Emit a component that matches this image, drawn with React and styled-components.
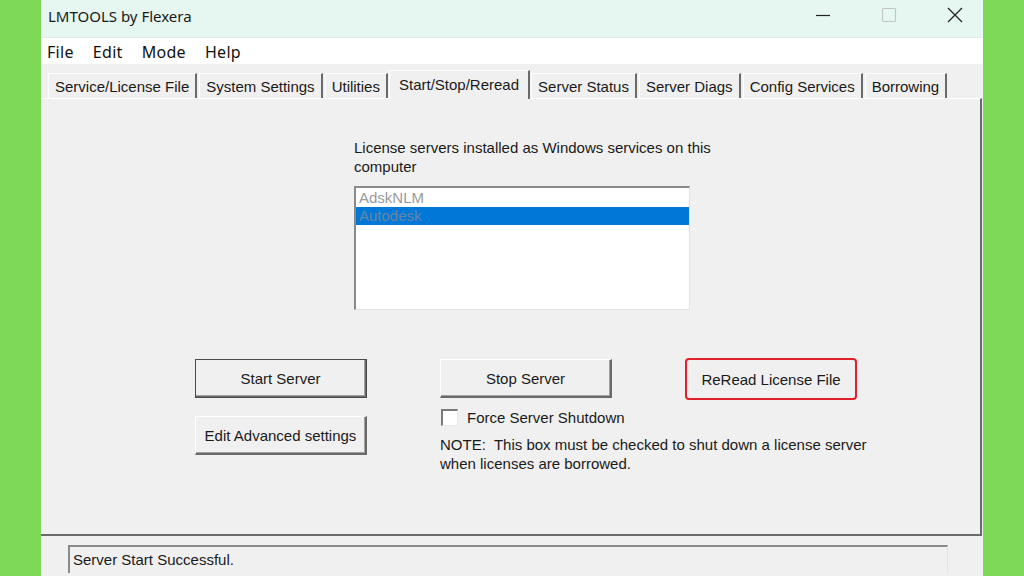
import styled, { createGlobalStyle } from "styled-components";

const GlobalStyle = createGlobalStyle`
  html, body {
    margin: 0;
    padding: 0;
    background: #7ed957;
    overflow: hidden;
  }
  body {
    font-family: "Liberation Sans", Arial, sans-serif;
  }
`;

const tabs = [
  "Service/License File",
  "System Settings",
  "Utilities",
  "Start/Stop/Reread",
  "Server Status",
  "Server Diags",
  "Config Services",
  "Borrowing",
];

export default function App() {
  return (
    <>
      <GlobalStyle />
      <Page>
        <Window>
          <TitleBar>
            <Title>LMTOOLS by Flexera</Title>
            <Controls>
              <Ctrl>
                <svg width="16" height="16" viewBox="0 0 16 16">
                  <line x1="1" y1="8.5" x2="15" y2="8.5" stroke="#222" strokeWidth="1.2" />
                </svg>
              </Ctrl>
              <Ctrl>
                <svg width="16" height="16" viewBox="0 0 16 16">
                  <rect x="1.5" y="1.5" width="13" height="13" rx="1" fill="none" stroke="#c4c4c4" strokeWidth="1.1" />
                </svg>
              </Ctrl>
              <Ctrl>
                <svg width="16" height="16" viewBox="0 0 16 16">
                  <path d="M1 1 L15 15 M15 1 L1 15" stroke="#222" strokeWidth="1.3" />
                </svg>
              </Ctrl>
            </Controls>
          </TitleBar>

          <MenuBar>
            <MenuItem>File</MenuItem>
            <MenuItem>Edit</MenuItem>
            <MenuItem>Mode</MenuItem>
            <MenuItem>Help</MenuItem>
          </MenuBar>

          <TabStrip>
            {tabs.map((t) => (
              <Tab key={t} $active={t === "Start/Stop/Reread"}>
                {t}
              </Tab>
            ))}
          </TabStrip>

          <Panel>
            <ListSection>
              <Label>License servers installed as Windows services on this computer</Label>
              <ListBox>
                <ListItem>AdskNLM</ListItem>
                <ListItem $selected>Autodesk</ListItem>
              </ListBox>
            </ListSection>

            <ButtonRow>
              <Column>
                <Button $default>Start Server</Button>
                <Button>Edit Advanced settings</Button>
              </Column>
              <Column>
                <Button>Stop Server</Button>
                <CheckRow>
                  <CheckBox />
                  <span>Force Server Shutdown</span>
                </CheckRow>
                <Note>
                  NOTE:&nbsp; This box must be checked to shut down a license server
                  <br />
                  when licenses are borrowed.
                </Note>
              </Column>
              <Column>
                <Highlight>
                  <Button $flat>ReRead License File</Button>
                </Highlight>
              </Column>
            </ButtonRow>
          </Panel>

          <StatusBar>
            <StatusField>Server Start Successful.</StatusField>
          </StatusBar>
        </Window>
      </Page>
    </>
  );
}

const Page = styled.div`
  width: 1024px;
  height: 576px;
  display: flex;
  padding-left: 41px;
  box-sizing: border-box;
`;

const Window = styled.div`
  width: 942px;
  height: 576px;
  background: #f0f0f0;
  display: flex;
  flex-direction: column;
  overflow: hidden;
`;

const TitleBar = styled.div`
  height: 38px;
  flex-shrink: 0;
  background: #e6f6f0;
  display: flex;
  align-items: center;
  justify-content: space-between;
  padding-left: 7px;
  border-bottom: 1px solid #e2e8e5;
  box-sizing: border-box;
`;

const Title = styled.div`
  font-family: "Noto Sans", "Liberation Sans", sans-serif;
  font-size: 15px;
  color: #1a1a1a;
  margin-top: -6px;
`;

const Controls = styled.div`
  display: flex;
  align-items: center;
  margin-top: -8px;
  margin-right: -5px;
`;

const Ctrl = styled.div`
  width: 66px;
  display: flex;
  justify-content: center;
`;

const MenuBar = styled.div`
  height: 26px;
  flex-shrink: 0;
  background: #ffffff;
  display: flex;
  align-items: center;
  padding-left: 6px;
`;

const MenuItem = styled.div`
  font-family: "Noto Sans", "Liberation Sans", sans-serif;
  font-size: 16px;
  letter-spacing: 0.3px;
  color: #111;
  margin-right: 19px;
  margin-top: 1px;
`;

const TabStrip = styled.div`
  height: 34px;
  flex-shrink: 0;
  display: flex;
  align-items: flex-end;
  padding-left: 6px;
  background: #f0f0f0;
  box-sizing: border-box;
`;

const Tab = styled.div`
  font-size: 15px;
  color: #1a1a1a;
  height: ${(p) => (p.$active ? "29px" : "25px")};
  line-height: ${(p) => (p.$active ? "27px" : "25px")};
  padding: 0 ${(p) => (p.$active ? "9px" : "6px")};
  margin: 0 ${(p) => (p.$active ? "0" : "1px")};
  margin-bottom: ${(p) => (p.$active ? "-1px" : "0")};
  border-top: 1px solid #ffffff;
  border-left: 1px solid #ffffff;
  border-right: 2px solid #6a6a6a;
  background: #f0f0f0;
  white-space: nowrap;
  box-sizing: border-box;
  position: relative;
  z-index: ${(p) => (p.$active ? 2 : 1)};
`;

const Panel = styled.div`
  flex: 1;
  position: relative;
  border-top: 1px solid #ffffff;
  border-right: 2px solid #6a6a6a;
  border-bottom: 2px solid #6a6a6a;
  margin-right: 1px;
  padding-top: 39px;
  display: flex;
  flex-direction: column;
  background: #f0f0f0;
`;

const ListSection = styled.div`
  margin-left: 313px;
  width: 365px;
`;

const Label = styled.div`
  font-size: 15px;
  line-height: 19px;
  color: #1a1a1a;
`;

const ListBox = styled.div`
  margin-top: 10px;
  width: 336px;
  height: 124px;
  background: #ffffff;
  border-top: 2px solid #8a8a8a;
  border-left: 2px solid #8a8a8a;
  border-right: 1px solid #e3e3e3;
  border-bottom: 1px solid #e3e3e3;
  box-sizing: border-box;
  padding-top: 1px;
`;

const ListItem = styled.div`
  height: 18px;
  line-height: 18px;
  font-size: 15px;
  padding-left: 3px;
  color: ${(p) => (p.$selected ? "#6a84a6" : "#9a9a9a")};
  background: ${(p) => (p.$selected ? "#0078d7" : "transparent")};
`;

const ButtonRow = styled.div`
  display: flex;
  margin-top: 49px;
  margin-left: 154px;
  gap: 73px;
`;

const Column = styled.div`
  width: 172px;
  display: flex;
  flex-direction: column;
  gap: 18px;
`;

const Button = styled.div`
  width: 172px;
  height: 39px;
  box-sizing: border-box;
  display: flex;
  align-items: center;
  justify-content: center;
  font-size: 15px;
  color: #1a1a1a;
  background: #f0f0f0;
  border-top: 1px solid #ffffff;
  border-left: 1px solid #ffffff;
  border-right: 2px solid #6a6a6a;
  border-bottom: 2px solid #6a6a6a;
  outline: ${(p) => (p.$default ? "1px solid #4a4a4a" : "none")};
  outline-offset: -1px;
  box-shadow: ${(p) => (p.$flat ? "none" : "inset -1px -1px 0 #a0a0a0")};
`;

const Highlight = styled.div`
  width: 172px;
  height: 42px;
  box-sizing: border-box;
  border: 2px solid #e0202a;
  border-radius: 4px;
  display: flex;
  align-items: center;
  justify-content: center;
  margin-top: -1px;

  & > div {
    width: 166px;
    height: 36px;
    border: none;
  }
`;

const CheckRow = styled.div`
  display: flex;
  align-items: center;
  gap: 9px;
  margin-top: -7px;
  margin-left: 1px;
  font-size: 15px;
  color: #1a1a1a;
  white-space: nowrap;
`;

const CheckBox = styled.div`
  width: 17px;
  height: 17px;
  flex-shrink: 0;
  box-sizing: border-box;
  background: #ffffff;
  border-top: 2px solid #7a7a7a;
  border-left: 2px solid #7a7a7a;
  border-right: 1px solid #e6e6e6;
  border-bottom: 1px solid #e6e6e6;
`;

const Note = styled.div`
  width: 470px;
  margin-top: -9px;
  font-size: 15px;
  line-height: 19px;
  color: #1a1a1a;
`;

const StatusBar = styled.div`
  height: 40px;
  flex-shrink: 0;
  display: flex;
  padding: 9px 0 0 27px;
  box-sizing: border-box;
  background: #f0f0f0;
`;

const StatusField = styled.div`
  width: 880px;
  height: 28px;
  box-sizing: border-box;
  border-top: 2px solid #8a8a8a;
  border-left: 2px solid #8a8a8a;
  border-right: 1px solid #e3e3e3;
  padding-left: 3px;
  line-height: 26px;
  font-size: 15px;
  color: #1a1a1a;
`;
